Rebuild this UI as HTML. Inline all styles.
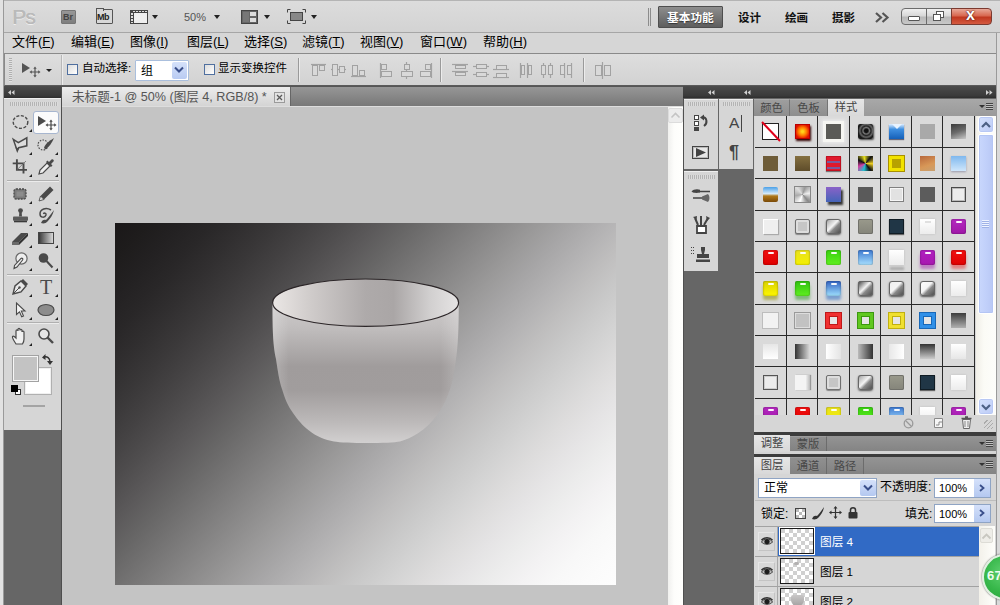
<!DOCTYPE html>
<html lang="zh-CN">
<head>
<meta charset="utf-8">
<title>Photoshop</title>
<style>
*{box-sizing:border-box;margin:0;padding:0}
html,body{width:1000px;height:605px;overflow:hidden;background:#666}
body{font-family:"Liberation Sans","Noto Sans CJK SC",sans-serif;font-size:12px;color:#000;position:relative}
.abs,.a{position:absolute}
#app{position:absolute;left:0;top:0;width:1000px;height:605px;overflow:hidden;background:#666666}
#appbar{left:0;top:0;width:1000px;height:33px;background:linear-gradient(#dcdcdc,#d3d3d3);border-bottom:1px solid #a6a6a6;border-top:1px solid #b4b4b4}
#menubar{left:0;top:33px;width:1000px;height:21px;background:#d6d6d6}
#optbar{left:4px;top:53px;width:993px;height:33px;background:linear-gradient(#dedede,#d2d2d2);border:1px solid #8a8a8a;border-bottom:1px solid #5a5a5a}
#leftedge{left:0;top:0;width:4px;height:605px;background:#e2e2e2;border-right:1px solid #9a9a9a}
#rightedge{left:996px;top:33px;width:4px;height:572px;background:#dadada;border-left:1px solid #9a9a9a}
.menu{position:absolute;top:32px;height:21px;line-height:20px;font-size:13px;white-space:nowrap;color:#000}
.menu u{text-decoration:underline;text-underline-offset:1px}
.lbl{position:absolute;white-space:nowrap}
.hdr{position:absolute;background:linear-gradient(#4b4b4b,#3a3a3a 80%,#2e2e2e);height:12px}
.panel{position:absolute;background:#d6d6d6}
.grip{position:absolute;height:4px;background:repeating-linear-gradient(90deg,#b4b4b4 0 1px,#dcdcdc 1px 2px)}
.tab{position:absolute;font-size:11.3px;line-height:17px;text-align:center;color:#3a3a3a;white-space:nowrap}
.tabon{background:linear-gradient(#e6e6e6,#d8d8d8);color:#444}
.taboff{background:linear-gradient(#9e9e9e,#8e8e8e);border-right:1px solid #747474;border-top:1px solid #aaa;color:#484848}
.tabbar{position:absolute;background:linear-gradient(#a8a8a8,#9a9a9a);height:17px}
.tabbar.dk{background:linear-gradient(#949494,#848484)}
.taboff.dk2{background:linear-gradient(#909090,#828282);border-top-color:#9c9c9c;border-right-color:#6c6c6c}
.cell{position:absolute;width:31px;height:31px;background:#dadada}
.sw{position:absolute;left:8px;top:8px;width:15px;height:15px}
.sep{position:absolute;left:7px;width:52px;height:1px;background:#b0b0b0;border-bottom:1px solid #ececec;height:2px}
svg{position:absolute;overflow:visible}
.tri{position:absolute;width:0;height:0;border-left:3px solid transparent;border-bottom:3px solid #222}
.inp{position:absolute;background:#fff;border:1px solid #8fa4c4}
</style>
</head>
<body>
<div id="app">
<div class="abs" id="appbar"></div>
<div class="abs" id="menubar"></div>
<div class="abs" id="optbar"></div>
<div class="menu" style="left:12px">文件(<u>F</u>)</div>
<div class="menu" style="left:71px">编辑(<u>E</u>)</div>
<div class="menu" style="left:130px">图像(<u>I</u>)</div>
<div class="menu" style="left:187px">图层(<u>L</u>)</div>
<div class="menu" style="left:244px">选择(<u>S</u>)</div>
<div class="menu" style="left:302px">滤镜(<u>T</u>)</div>
<div class="menu" style="left:360px">视图(<u>V</u>)</div>
<div class="menu" style="left:420px">窗口(<u>W</u>)</div>
<div class="menu" style="left:483px">帮助(<u>H</u>)</div>
<div class="lbl" style="left:12px;top:4px;font-size:21px;line-height:26px;color:#bababa;letter-spacing:-0.8px;text-shadow:0.4px 0 0 #bababa,0 1px 0 #efefef">Ps</div>
<div class="a" style="left:61px;top:10px;width:15px;height:14px;background:linear-gradient(#979797,#7e7e7e);border:1px solid #767676;border-radius:1px"></div><div class="lbl" style="left:63px;top:11px;font-size:9px;line-height:12px;color:#444;font-weight:bold">Br</div>
<div class="a" style="left:96px;top:9px;width:17px;height:15px;background:#d8d8d8;border:1px solid #555;border-radius:1px"></div><div class="a" style="left:96px;top:8px;width:8px;height:3px;background:#d8d8d8;border:1px solid #555;border-bottom:none"></div><div class="lbl" style="left:97px;top:11px;font-size:9px;line-height:12px;color:#222;font-weight:bold;letter-spacing:-0.5px">Mb</div>
<div class="a" style="left:130px;top:10px;width:18px;height:14px;background:#eee;border:1px solid #444;border-top:3px solid #444;border-left:4px solid #444"></div><div class="a" style="left:133px;top:11px;width:14px;height:1px;background:repeating-linear-gradient(90deg,#ddd 0 2px,#444 2px 3px)"></div>
<div class="a" style="left:131px;top:13px;width:2px;height:10px;background:repeating-linear-gradient(#ddd 0 2px,#444 2px 3px)"></div>
<div class="a" style="left:152px;top:15px;width:0;height:0;border-left:3.5px solid transparent;border-right:3.5px solid transparent;border-top:4.0px solid #222"></div>
<div class="lbl" style="left:184px;top:10px;font-size:11px;line-height:14px;color:#555">50%</div>
<div class="a" style="left:214px;top:15px;width:0;height:0;border-left:3.5px solid transparent;border-right:3.5px solid transparent;border-top:4.0px solid #222"></div>
<div class="a" style="left:241px;top:10px;width:17px;height:14px;background:#666;border:1px solid #444"></div><div class="a" style="left:250px;top:12px;width:6px;height:4px;background:#ddd"></div><div class="a" style="left:250px;top:18px;width:6px;height:4px;background:#ddd"></div><div class="a" style="left:243px;top:12px;width:6px;height:10px;background:#777"></div>
<div class="a" style="left:264px;top:15px;width:0;height:0;border-left:3.5px solid transparent;border-right:3.5px solid transparent;border-top:4.0px solid #222"></div>
<div class="a" style="left:290px;top:12px;width:13px;height:9px;background:#888;border:1px solid #444"></div>
<svg style="left:287px;top:9px" width="19" height="15"><path d="M0.5 3.5V0.5H3.5M15.5 0.5H18.5V3.5M18.5 11.5V14.5H15.5M3.5 14.5H0.5V11.5" fill="none" stroke="#444" stroke-width="1"/></svg>
<div class="a" style="left:311px;top:15px;width:0;height:0;border-left:3.5px solid transparent;border-right:3.5px solid transparent;border-top:4.0px solid #222"></div>
<div class="a" style="left:648px;top:8px;width:1px;height:18px;background:#8c8c8c"></div><div class="a" style="left:650px;top:8px;width:1px;height:18px;background:#8c8c8c"></div>
<div class="a" style="left:658px;top:6px;width:65px;height:22px;background:linear-gradient(#8e8e8e,#5e5e5e);border:1px solid #4e4e4e;border-radius:1px"></div>
<div class="lbl" style="left:667px;top:9px;font-size:11.7px;line-height:18px;color:#fff;font-weight:bold;text-shadow:0 1px 1px #333">基本功能</div>
<div class="lbl" style="left:738px;top:9px;font-size:11.5px;line-height:18px;color:#111;font-weight:bold">设计</div>
<div class="lbl" style="left:785px;top:9px;font-size:11.5px;line-height:18px;color:#111;font-weight:bold">绘画</div>
<div class="lbl" style="left:832px;top:9px;font-size:11.5px;line-height:18px;color:#111;font-weight:bold">摄影</div>
<svg style="left:875px;top:12px" width="14" height="11"><path d="M1 1L6 5.5L1 10M7.5 1L12.5 5.5L7.5 10" fill="none" stroke="#555" stroke-width="2.2"/></svg>
<div class="a" style="left:901px;top:8px;width:26px;height:17px;background:linear-gradient(#f0f0f0,#d8d8d8 45%,#b8b8b8 55%,#c8c8c8);border:1px solid #6c6c6c;border-radius:4px 0 0 4px"></div>
<div class="a" style="left:926px;top:8px;width:26px;height:17px;background:linear-gradient(#f0f0f0,#d8d8d8 45%,#b8b8b8 55%,#c8c8c8);border:1px solid #6c6c6c"></div>
<div class="a" style="left:951px;top:8px;width:41px;height:17px;background:linear-gradient(#e8a898,#d86850 45%,#c03820 55%,#d45a40);border:1px solid #7b3a30;border-radius:0 4px 4px 0"></div>
<div class="a" style="left:908px;top:16px;width:12px;height:5px;background:#fff;border:1px solid #555;border-radius:1px"></div>
<div class="a" style="left:936px;top:11px;width:8px;height:7px;background:#fff;border:1px solid #555"></div><div class="a" style="left:933px;top:14px;width:8px;height:7px;background:#fff;border:1px solid #555"></div>
<div class="lbl" style="left:966px;top:6px;font-size:16px;line-height:17px;color:#fff;font-weight:bold;text-shadow:0 0 2px #5b1a10,0 0 1px #5b1a10">x</div>
<div class="a" style="left:9px;top:58px;width:3px;height:24px;background:repeating-linear-gradient(#b0b0b0 0 1px,#e2e2e2 1px 2px)"></div>
<svg style="left:21px;top:62px" width="22" height="16"><path d="M1 1L1 11L9 6Z" fill="#555"/><path d="M14 6V14M10 10H18" stroke="#555" stroke-width="1.2" fill="none"/><path d="M14 4.5L12.3 6.8H15.7ZM14 15.5L12.3 13.2H15.7ZM8.5 10L10.8 8.3V11.7ZM19.5 10L17.2 8.3V11.7Z" fill="#555"/></svg>
<div class="a" style="left:46px;top:69px;width:0;height:0;border-left:3px solid transparent;border-right:3px solid transparent;border-top:3.5px solid #222"></div>
<div class="a" style="left:61px;top:55px;width:1px;height:30px;background:#b8b8b8"></div><div class="a" style="left:62px;top:55px;width:1px;height:30px;background:#ececec"></div>
<div class="a" style="left:67px;top:64px;width:11px;height:11px;background:linear-gradient(135deg,#dcdcdc,#fff);border:1px solid #4f6f9f"></div>
<div class="lbl" style="left:82px;top:60px;font-size:11.5px;line-height:17px;color:#000">自动选择:</div>
<div class="a" style="left:135px;top:60px;width:54px;height:21px;background:#fff;border:1px solid #aabfdd;border-radius:1px"></div>
<div class="lbl" style="left:141px;top:63px;font-size:12px;line-height:17px">组</div>
<div class="a" style="left:172px;top:62px;width:15px;height:17px;background:linear-gradient(#d5e1fa,#b9cbf2);border-radius:2px"></div>
<svg style="left:174px;top:66px" width="10" height="8"><path d="M1 1.5L5 5.5L9 1.5" fill="none" stroke="#3a4f8a" stroke-width="2"/></svg>
<div class="a" style="left:204px;top:64px;width:11px;height:11px;background:linear-gradient(135deg,#dcdcdc,#fff);border:1px solid #4f6f9f"></div>
<div class="lbl" style="left:218px;top:60px;font-size:11.5px;line-height:17px;color:#000">显示变换控件</div>
<div class="a" style="left:298px;top:58px;width:1px;height:24px;background:#9a9a9a"></div><div class="a" style="left:299px;top:58px;width:1px;height:24px;background:#ececec"></div>
<div class="a" style="left:440px;top:58px;width:1px;height:24px;background:#9a9a9a"></div><div class="a" style="left:441px;top:58px;width:1px;height:24px;background:#ececec"></div>
<div class="a" style="left:583px;top:58px;width:1px;height:24px;background:#9a9a9a"></div><div class="a" style="left:584px;top:58px;width:1px;height:24px;background:#ececec"></div>
<svg style="left:0;top:0" width="1000" height="100"><path d="M311 64.5L326 64.5" stroke="#a2a2a2" stroke-width="1.2"/><rect x="312.5" y="65.5" width="5" height="10" fill="#d9d9d9" stroke="#a2a2a2"/><rect x="319.5" y="65.5" width="5" height="5" fill="#d9d9d9" stroke="#a2a2a2"/><path d="M331 69.5L346 69.5" stroke="#a2a2a2" stroke-width="1.2"/><rect x="332.5" y="64.5" width="5" height="11" fill="#d9d9d9" stroke="#a2a2a2"/><rect x="339.5" y="66.5" width="5" height="6" fill="#d9d9d9" stroke="#a2a2a2"/><path d="M351 76.5L366 76.5" stroke="#a2a2a2" stroke-width="1.2"/><rect x="352.5" y="65.5" width="5" height="10" fill="#d9d9d9" stroke="#a2a2a2"/><rect x="359.5" y="70.5" width="5" height="5" fill="#d9d9d9" stroke="#a2a2a2"/><path d="M380.5 63L380.5 78" stroke="#a2a2a2" stroke-width="1.2"/><rect x="381.5" y="64.5" width="5" height="5" fill="#d9d9d9" stroke="#a2a2a2"/><rect x="381.5" y="71.5" width="10" height="5" fill="#d9d9d9" stroke="#a2a2a2"/><path d="M406.5 62L406.5 79" stroke="#a2a2a2" stroke-width="1.2"/><rect x="404.5" y="64.5" width="5" height="5" fill="#d9d9d9" stroke="#a2a2a2"/><rect x="401.5" y="71.5" width="11" height="5" fill="#d9d9d9" stroke="#a2a2a2"/><path d="M431.5 63L431.5 78" stroke="#a2a2a2" stroke-width="1.2"/><rect x="425.5" y="64.5" width="5" height="5" fill="#d9d9d9" stroke="#a2a2a2"/><rect x="420.5" y="71.5" width="10" height="5" fill="#d9d9d9" stroke="#a2a2a2"/><path d="M452 64.5L468 64.5" stroke="#a2a2a2" stroke-width="1.2"/><rect x="455.5" y="65.5" width="10" height="3" fill="#d9d9d9" stroke="#a2a2a2"/><path d="M452 71.5L468 71.5" stroke="#a2a2a2" stroke-width="1.2"/><rect x="455.5" y="72.5" width="10" height="3" fill="#d9d9d9" stroke="#a2a2a2"/><path d="M473 66.5L489 66.5" stroke="#a2a2a2" stroke-width="1.2"/><rect x="476.5" y="64.5" width="10" height="4" fill="#d9d9d9" stroke="#a2a2a2"/><path d="M473 74.5L489 74.5" stroke="#a2a2a2" stroke-width="1.2"/><rect x="476.5" y="72.5" width="10" height="4" fill="#d9d9d9" stroke="#a2a2a2"/><path d="M493 69.5L509 69.5" stroke="#a2a2a2" stroke-width="1.2"/><rect x="496.5" y="65.5" width="10" height="4" fill="#d9d9d9" stroke="#a2a2a2"/><path d="M493 77.5L509 77.5" stroke="#a2a2a2" stroke-width="1.2"/><rect x="496.5" y="73.5" width="10" height="4" fill="#d9d9d9" stroke="#a2a2a2"/><path d="M520.5 63L520.5 78" stroke="#a2a2a2" stroke-width="1.2"/><rect x="521.5" y="65.5" width="3" height="9" fill="#d9d9d9" stroke="#a2a2a2"/><path d="M527.5 63L527.5 78" stroke="#a2a2a2" stroke-width="1.2"/><rect x="528.5" y="65.5" width="3" height="9" fill="#d9d9d9" stroke="#a2a2a2"/><path d="M543.5 63L543.5 78" stroke="#a2a2a2" stroke-width="1.2"/><rect x="541.5" y="65.5" width="4" height="9" fill="#d9d9d9" stroke="#a2a2a2"/><path d="M550.5 63L550.5 78" stroke="#a2a2a2" stroke-width="1.2"/><rect x="548.5" y="65.5" width="4" height="9" fill="#d9d9d9" stroke="#a2a2a2"/><path d="M564.5 63L564.5 78" stroke="#a2a2a2" stroke-width="1.2"/><rect x="560.5" y="65.5" width="4" height="9" fill="#d9d9d9" stroke="#a2a2a2"/><path d="M571.5 63L571.5 78" stroke="#a2a2a2" stroke-width="1.2"/><rect x="567.5" y="65.5" width="4" height="9" fill="#d9d9d9" stroke="#a2a2a2"/><rect x="595.5" y="65.5" width="6" height="10" fill="#d9d9d9" stroke="#a2a2a2"/><rect x="604.5" y="65.5" width="6" height="10" fill="#d9d9d9" stroke="#a2a2a2"/><path d="M602.5 62L602.5 79" stroke="#a2a2a2" stroke-width="1.2"/></svg>
<div class="hdr" style="left:4px;top:86px;width:57px;height:12px"></div>
<svg style="left:8px;top:90px" width="7" height="5"><path d="M3 0L0 2.5L3 5ZM6.5 0L3.5 2.5L6.5 5Z" fill="#d0d0d0"/></svg>
<div class="panel" style="left:4px;top:98px;width:57px;height:332px;border-top:1px solid #efefef"></div>
<div class="grip" style="left:10px;top:102px;width:48px"></div>
<div class="a" style="left:61px;top:86px;width:1px;height:519px;background:#4e4e4e"></div>
<div class="a" style="left:33px;top:111px;width:26px;height:23px;background:#fbfbfb;border:1px solid #a7b6cf;border-radius:3px"></div>
<div class="sep" style="top:180px"></div>
<div class="sep" style="top:274px"></div>
<div class="sep" style="top:322px"></div>
<svg style="left:10px;top:112px" width="20" height="20" viewBox="0 0 20 20"><ellipse cx="10.5" cy="10" rx="7.3" ry="6.4" fill="none" stroke="#4a4a4a" stroke-width="1.4" stroke-dasharray="3 1.6"/></svg>
<div class="tri" style="left:29px;top:129px"></div>
<svg style="left:37px;top:115px" width="22" height="16"><path d="M1 1L1 11L9 6Z" fill="#4a4a4a"/><path d="M14 6V14M10 10H18" stroke="#4a4a4a" stroke-width="1.2" fill="none"/><path d="M14 4.5L12.3 6.8H15.7ZM14 15.5L12.3 13.2H15.7ZM8.5 10L10.8 8.3V11.7ZM19.5 10L17.2 8.3V11.7Z" fill="#4a4a4a"/></svg>
<svg style="left:10px;top:135px" width="20" height="20" viewBox="0 0 20 20"><path d="M3.3 4.4L8.3 7.7L16.8 2.8L16.8 10.8L8.7 12.7L7.3 16Z" fill="#dcdcdc" stroke="#4a4a4a" stroke-width="1.5" stroke-linejoin="miter"/><path d="M7.3 16.5L5.2 12.2L9 13.2Z" fill="#4a4a4a"/></svg>
<div class="tri" style="left:29px;top:152px"></div>
<svg style="left:36px;top:135px" width="20" height="20" viewBox="0 0 20 20"><circle cx="7" cy="10" r="5" fill="none" stroke="#4a4a4a" stroke-width="1.2" stroke-dasharray="1.5 1.3"/><path d="M8 13C9 9 13 6 18 3C16 8 13 12 9.5 14.5Z" fill="#4a4a4a"/></svg>
<div class="tri" style="left:55px;top:152px"></div>
<svg style="left:10px;top:157px" width="20" height="20" viewBox="0 0 20 20"><path d="M6.9 2.2V12.9H17M2.7 6.4H13.5V16.5" fill="none" stroke="#4a4a4a" stroke-width="1.9"/><path d="M7.5 12.3L16 4" stroke="#777" stroke-width="0.9"/></svg>
<div class="tri" style="left:29px;top:174px"></div>
<svg style="left:36px;top:157px" width="20" height="20" viewBox="0 0 20 20"><path d="M3 17L4 13L11 6L14 9L7 16Z" fill="#eee" stroke="#4a4a4a" stroke-width="1.2"/><path d="M10 5L15 10L16.5 8.5L15 7L17.5 4.5C18.5 3.2 16.8 1.5 15.5 2.5L13 5L11.5 3.5Z" fill="#4a4a4a"/></svg>
<div class="tri" style="left:55px;top:174px"></div>
<svg style="left:10px;top:184px" width="20" height="20" viewBox="0 0 20 20"><rect x="4" y="5" width="12" height="10" rx="2" fill="#7a7a7a" stroke="#4a4a4a" stroke-width="1.3" stroke-dasharray="2 1"/><rect x="6.5" y="7.5" width="7" height="5" fill="#8c8c8c"/></svg>
<div class="tri" style="left:29px;top:201px"></div>
<svg style="left:36px;top:184px" width="20" height="20" viewBox="0 0 20 20"><path d="M3 17L4.5 12L14 2.5L17.5 6L8 15.5Z" fill="#4a4a4a"/><path d="M3 17L4.5 12L8 15.5Z" fill="#ddd" stroke="#4a4a4a" stroke-width="0.8"/></svg>
<div class="tri" style="left:55px;top:201px"></div>
<svg style="left:10px;top:206px" width="20" height="20" viewBox="0 0 20 20"><circle cx="10.5" cy="4.6" r="2.4" fill="#4a4a4a"/><path d="M9.3 6H11.7L12 10.5H9Z" fill="#4a4a4a"/><rect x="3" y="10.5" width="15" height="4.2" rx="0.8" fill="#5a5a5a"/><rect x="4" y="14.7" width="13" height="1.6" fill="#3a3a3a"/></svg>
<div class="tri" style="left:29px;top:223px"></div>
<svg style="left:36px;top:206px" width="20" height="20" viewBox="0 0 20 20"><path d="M15 4C10 1 4 3 4 8C4 12 9 12 10 9C10.5 7 8 6.5 7.5 8" fill="none" stroke="#4a4a4a" stroke-width="1.5"/><path d="M5 17C6 14 8 13 10 14C12 12 15 8 18 4C17 9 14 13 11.5 15.5C10 17.5 7 18 5 17Z" fill="#4a4a4a"/></svg>
<div class="tri" style="left:55px;top:223px"></div>
<svg style="left:10px;top:228px" width="20" height="20" viewBox="0 0 20 20"><path d="M2 14L11 5H18L9 14Z" fill="#4a4a4a"/><path d="M2 14H9V17H2Z" fill="#6a6a6a"/><path d="M9 14L18 5V8L9 17Z" fill="#333"/></svg>
<div class="tri" style="left:29px;top:245px"></div>
<div class="a" style="left:38px;top:232px;width:16px;height:12px;border:1px solid #444;background:linear-gradient(90deg,#3a3a3a,#d8d8d8)"></div>
<div class="tri" style="left:55px;top:245px"></div>
<svg style="left:10px;top:251px" width="20" height="20" viewBox="0 0 20 20"><circle cx="11.5" cy="7.5" r="5.6" fill="#eee" stroke="#666" stroke-width="1.2"/><path d="M4 17.5L4.5 14.5L11 7.5C12 6.5 13.5 8 12.6 9L7 16Z" fill="#e8e8e8" stroke="#4a4a4a" stroke-width="1.1"/></svg>
<div class="tri" style="left:29px;top:268px"></div>
<svg style="left:36px;top:251px" width="20" height="20" viewBox="0 0 20 20"><circle cx="7.5" cy="7" r="4.8" fill="#4a4a4a"/><path d="M10.5 10L16.5 16.5" stroke="#4a4a4a" stroke-width="2"/></svg>
<div class="tri" style="left:55px;top:268px"></div>
<svg style="left:10px;top:277px" width="20" height="20" viewBox="0 0 20 20"><path d="M3 17L5 9L11 4L16 9L11 15Z" fill="#e8e8e8" stroke="#4a4a4a" stroke-width="1.4"/><path d="M11 4L13 2L18 7L16 9Z" fill="#4a4a4a"/><path d="M3 17L9 11" stroke="#4a4a4a"/><circle cx="9.5" cy="10.5" r="1.2" fill="#4a4a4a"/></svg>
<div class="tri" style="left:29px;top:294px"></div>
<div class="lbl" style="left:40px;top:274px;font-family:'Liberation Serif',serif;font-size:20px;line-height:26px;color:#4a4a4a">T</div>
<div class="tri" style="left:55px;top:294px"></div>
<svg style="left:10px;top:300px" width="20" height="20" viewBox="0 0 20 20"><path d="M6.5 3V14.5L9.5 11.8L11.7 16.8L13.5 16L11.3 11H15Z" fill="#f4f4f4" stroke="#4a4a4a" stroke-width="1.1"/></svg>
<div class="tri" style="left:29px;top:317px"></div>
<svg style="left:36px;top:300px" width="20" height="20" viewBox="0 0 20 20"><ellipse cx="10" cy="10" rx="8" ry="5.5" fill="#8c8c8c" stroke="#4a4a4a" stroke-width="1.2"/></svg>
<div class="tri" style="left:55px;top:317px"></div>
<svg style="left:10px;top:326px" width="20" height="20" viewBox="0 0 20 20"><path d="M6 18C4 15 2 12 2.5 10.5C3.5 9.5 5 11 6 12V5C6 3.5 8 3.5 8 5V3.5C8 2 10 2 10 3.5V4.5C10 3 12 3 12 4.5V6C12 4.8 14 4.8 14 6V13C14 15 13.5 16.5 12.5 18Z" fill="#f0f0f0" stroke="#4a4a4a" stroke-width="1.2"/></svg>
<div class="tri" style="left:29px;top:343px"></div>
<svg style="left:36px;top:326px" width="20" height="20" viewBox="0 0 20 20"><circle cx="8" cy="8" r="5" fill="#e6e6e6" stroke="#4a4a4a" stroke-width="1.6"/><path d="M11.5 11.5L17 17" stroke="#4a4a4a" stroke-width="2.4"/></svg>
<div class="a" style="left:25px;top:368px;width:26px;height:26px;background:#fff;border:1px solid #f0f0f0;box-shadow:0 0 0 1px #b0b0b0"></div>
<div class="a" style="left:13px;top:356px;width:25px;height:25px;background:#c3c3c3;border:1px solid #f6f6f6;box-shadow:0 0 0 1px #a2a2a2"></div>
<svg style="left:42px;top:353px" width="11" height="12"><path d="M2 4C5 3 8 5 8 9" fill="none" stroke="#333" stroke-width="1.5"/><path d="M0 4.5L3.5 1V7Z M8 12L5 8H11Z" fill="#333"/></svg>
<div class="a" style="left:15px;top:389px;width:6px;height:6px;background:#fff;border:1px solid #333"></div><div class="a" style="left:11px;top:385px;width:7px;height:7px;background:#000;border:1px solid #000"></div>
<div class="a" style="left:23px;top:405px;width:22px;height:2px;background:#a4a4a4"></div>
<div class="a" style="left:62px;top:86px;width:621px;height:20px;background:linear-gradient(#969696,#787878);border-top:1px solid #555"></div>
<div class="a" style="left:62px;top:87px;width:229px;height:19px;background:linear-gradient(#ececec,#d4d4d4);border-right:1px solid #666"></div>
<div class="lbl" style="left:72px;top:88px;font-size:12.6px;line-height:19px;color:#555">未标题-1 @ 50% (图层 4, RGB/8) *</div>
<div class="a" style="left:274px;top:92px;width:11px;height:11px;border:1px solid #9a9a9a;background:#e2e2e2"></div><svg style="left:277px;top:95px" width="5" height="5"><path d="M0 0L5 5M5 0L0 5" stroke="#5a5a5a" stroke-width="1.3"/></svg>
<div class="a" style="left:62px;top:106px;width:621px;height:499px;background:#c4c4c4;border-top:1px solid #ddd"></div>
<div class="a" style="left:668px;top:107px;width:15px;height:498px;background:linear-gradient(90deg,#f0f0ee,#fdfdfb 40%,#fffffd)"></div>
<div class="a" style="left:668px;top:108px;width:15px;height:15px;background:#ececec;border:1px solid #dcdcdc;border-radius:2px"></div>
<svg style="left:671px;top:112px" width="9" height="6"><path d="M0.5 5.5L4.5 1.5L8.5 5.5" fill="none" stroke="#c4c4c4" stroke-width="1.6"/></svg>
<div class="a" style="left:115px;top:223px;width:501px;height:362px;background:linear-gradient(131.3deg,rgb(26,23,24) 0%,rgb(30,28,28) 4%,rgb(35,33,34) 8%,rgb(41,39,40) 12%,rgb(49,47,48) 16%,rgb(58,56,57) 20%,rgb(68,66,67) 24%,rgb(79,77,78) 28%,rgb(91,89,90) 32%,rgb(103,102,102) 36%,rgb(116,115,115) 40%,rgb(129,128,128) 44%,rgb(142,141,141) 48%,rgb(155,154,154) 52%,rgb(167,166,167) 56%,rgb(179,178,179) 60%,rgb(191,190,190) 64%,rgb(201,201,201) 68%,rgb(211,211,211) 72%,rgb(221,220,220) 76%,rgb(229,228,229) 80%,rgb(236,236,236) 84%,rgb(243,242,243) 88%,rgb(248,248,248) 92%,rgb(251,251,251) 96%,rgb(253,253,253) 100%)"></div>
<svg style="left:115px;top:223px" width="500" height="362" viewBox="115 223 500 362">
<defs>
<linearGradient id="cb" x1="0" y1="303" x2="0" y2="444" gradientUnits="userSpaceOnUse"><stop offset="0" stop-color="#cfcccc"/><stop offset="0.18" stop-color="#c0bdbd"/><stop offset="0.45" stop-color="#a09c9c"/><stop offset="0.62" stop-color="#a19d9d"/><stop offset="0.85" stop-color="#bdbaba"/><stop offset="1" stop-color="#d3d1d1"/></linearGradient>
<linearGradient id="ci" x1="0" y1="0" x2="1" y2="0"><stop offset="0" stop-color="#ebe7e5"/><stop offset="0.2" stop-color="#d0cccb"/><stop offset="0.5" stop-color="#aeaaaa"/><stop offset="0.65" stop-color="#aaa6a6"/><stop offset="0.85" stop-color="#d2d0d0"/><stop offset="1" stop-color="#e6e4e4"/></linearGradient>
<linearGradient id="ce" x1="272" y1="0" x2="459" y2="0" gradientUnits="userSpaceOnUse"><stop offset="0" stop-color="#fff" stop-opacity="0.22"/><stop offset="0.09" stop-color="#fff" stop-opacity="0"/><stop offset="0.9" stop-color="#fff" stop-opacity="0"/><stop offset="1" stop-color="#fff" stop-opacity="0.2"/></linearGradient>
<filter id="bl" x="-10%" y="-10%" width="120%" height="120%"><feGaussianBlur stdDeviation="0.5"/></filter>
</defs>
<g filter="url(#bl)">
<path id="cp" d="M272.5 303 C272.5 330 273 345 276 359 C278 372 279 380 282 389 C285 399 288 406 293 413 C298 420 302 425 309 430.6 C317 437 325 440 334 441.5 C345 443.5 390 443.5 400 441.5 C406 440 412 437 417.6 433.6 C426 428 433 421 438.5 413 C444 405 447 398 450 389 C453 380 454.5 370 456 359 C458 345 458.7 330 458.7 303 Z" fill="url(#cb)"/>
<path d="M272.5 303 C272.5 330 273 345 276 359 C278 372 279 380 282 389 C285 399 288 406 293 413 C298 420 302 425 309 430.6 C317 437 325 440 334 441.5 C345 443.5 390 443.5 400 441.5 C406 440 412 437 417.6 433.6 C426 428 433 421 438.5 413 C444 405 447 398 450 389 C453 380 454.5 370 456 359 C458 345 458.7 330 458.7 303 Z" fill="url(#ce)"/>
</g>
<ellipse cx="365.6" cy="302.7" rx="93" ry="23.7" fill="url(#ci)" stroke="#2c2628" stroke-width="1.2"/>
</svg>
<div class="hdr" style="left:683px;top:86px;width:313px;height:12px"></div>
<svg style="left:708px;top:90px" width="7" height="5"><path d="M3 0L0 2.5L3 5ZM6.5 0L3.5 2.5L6.5 5Z" fill="#d0d0d0"/></svg>
<svg style="left:744px;top:90px" width="7" height="5"><path d="M3 0L0 2.5L3 5ZM6.5 0L3.5 2.5L6.5 5Z" fill="#d0d0d0"/></svg>
<svg style="left:986px;top:90px" width="7" height="5"><path d="M0 0L3 2.5L0 5ZM3.5 0L6.5 2.5L3.5 5Z" fill="#d0d0d0"/></svg>
<div class="a" style="left:683px;top:98px;width:1px;height:507px;background:#505050"></div>
<div class="panel" style="left:684px;top:99px;width:34px;height:70px;border-top:1px solid #eee"></div>
<div class="grip" style="left:688px;top:102px;width:27px"></div>
<div class="panel" style="left:684px;top:171px;width:34px;height:100px;border-top:1px solid #eee"></div>
<div class="grip" style="left:688px;top:175px;width:27px"></div>
<div class="panel" style="left:719px;top:99px;width:34px;height:70px;border-top:1px solid #eee"></div>
<div class="grip" style="left:723px;top:102px;width:27px"></div>
<svg style="left:693px;top:114px" width="18" height="18"><rect x="1.5" y="1.5" width="4" height="4" fill="#fff" stroke="#444"/><rect x="1.5" y="7.5" width="4" height="4" fill="#fff" stroke="#444"/><rect x="1" y="13" width="5" height="4" fill="#444"/><path d="M9 3C14 3 15 9 11 12" fill="none" stroke="#444" stroke-width="2"/><path d="M7 3.5L11 0.5V6.5Z" fill="#444"/></svg>
<div class="a" style="left:692px;top:146px;width:17px;height:13px;background:#e8e8e8;border:1px solid #444;box-shadow:inset 0 0 0 1px #bbb"></div><svg style="left:696px;top:148px" width="10" height="9"><path d="M0 0L10 4.5L0 9Z" fill="#444"/></svg>
<div class="lbl" style="left:729px;top:112px;font-size:15.5px;line-height:22px;color:#444">A</div><div class="a" style="left:741px;top:115px;width:1px;height:17px;background:#444"></div>
<div class="lbl" style="left:729px;top:141px;font-size:18px;line-height:22px;color:#444;font-weight:bold">¶</div>
<svg style="left:691px;top:188px" width="20" height="16"><path d="M8 3.5H19M2 10H12" stroke="#444" stroke-width="1.6"/><path d="M9 1.8C6 0.5 2 1.5 0.5 3.5C3 5.5 6.5 5 9 4.5Z" fill="#444"/><path d="M11 8.5L17 6C19 8 19 12 17 14L11 11.5Z" fill="#666"/></svg>
<svg style="left:692px;top:215px" width="18" height="20"><path d="M5 11H14V18H5Z" fill="#fff" stroke="#444" stroke-width="1.8"/><path d="M6 10L3 3M9 10V1M12 10L16 3" stroke="#444" stroke-width="2"/><path d="M1 2L5 1L4.5 5ZM14 1L18 3L15 6Z" fill="#444"/></svg>
<svg style="left:690px;top:246px" width="21" height="18"><path d="M1 1.5H4M1 4.5H4M1 7.5H4" stroke="#444" stroke-width="1.2" stroke-dasharray="1 1"/><path d="M11 1H15V4L14 8H19V12H7V8H12L11 4Z" fill="#444"/><rect x="6" y="13.5" width="14" height="2.5" fill="#444"/></svg>
<div class="tabbar" style="left:754px;top:99px;width:242px;height:17px"></div>
<div class="tab taboff" style="left:754px;top:99px;width:36px;height:17px">颜色</div>
<div class="tab taboff" style="left:790px;top:99px;width:38px;height:17px">色板</div>
<div class="tab tabon" style="left:828px;top:99px;width:36px;height:18px">样式</div>
<div class="a" style="left:979px;top:105px;width:0;height:0;border-left:3px solid transparent;border-right:3px solid transparent;border-top:3.5px solid #333"></div><div class="a" style="left:986px;top:103px;width:7px;height:7px;background:repeating-linear-gradient(#444 0 1px,#c0c0c0 1px 2px)"></div>
<div class="a" style="left:754px;top:116px;width:242px;height:316px;background:#d6d6d6"></div>
<div class="a" style="left:755px;top:116px;width:220px;height:299px;background:#2a2a2a;overflow:hidden"><div class="cell" style="left:0px;top:0px;width:31px;height:31px"><div class="sw" style="background:#fff;border:1px solid #222;left:7px;top:7px;width:17px;height:17px"></div><svg style="left:6px;top:5px" width="20" height="21"><path d="M1 1L19 20" stroke="#e0001a" stroke-width="2"/></svg></div><div class="cell" style="left:32px;top:0px;width:30px;height:31px"><div class="sw" style="background:radial-gradient(circle,#ffd21a 10%,#ff7a00 45%,#e01000 80%);box-shadow:1px 2px 2px #300;border:1px solid #b00"></div></div><div class="cell" style="left:63px;top:0px;width:31px;height:31px"><div class="sw" style="background:#5b5b57;box-shadow:0 0 0 3px #f6f6f2,0 0 3px 4px #eee"></div></div><div class="cell" style="left:95px;top:0px;width:30px;height:31px"><div class="sw" style="background:radial-gradient(circle at 55% 45%,#111 15%,#777 28%,#222 40%,#666 55%,#1a1a1a 70%);border-radius:2px;box-shadow:1px 1px 2px #444"></div></div><div class="cell" style="left:126px;top:0px;width:30px;height:31px"><div class="sw" style="background:linear-gradient(#dfeeff 0%,#3f8fe0 35%,#1560b8 100%);box-shadow:0 1px 1px #667"></div><div class="a" style="left:11px;top:8px;width:0;height:0;border-left:5px solid transparent;border-right:5px solid transparent;border-top:5px solid #e8f3ff"></div></div><div class="cell" style="left:157px;top:0px;width:30px;height:31px"><div class="sw" style="background:#a9a9a9;"></div></div><div class="cell" style="left:188px;top:0px;width:31px;height:31px"><div class="sw" style="background:linear-gradient(160deg,#3a3a3a,#6a6a6a 50%,#c8c8c8)"></div></div><div class="cell" style="left:0px;top:32px;width:31px;height:30px"><div class="sw" style="background:#6e5c38;"></div></div><div class="cell" style="left:32px;top:32px;width:30px;height:30px"><div class="sw" style="background:linear-gradient(#857040,#5e4c2a)"></div></div><div class="cell" style="left:63px;top:32px;width:31px;height:30px"><div class="sw" style="background:repeating-linear-gradient(#e0182c 0 4px,#7a5a9a 4px 6px);border:1px solid #c01020;box-shadow:0 1px 1px #777"></div></div><div class="cell" style="left:95px;top:32px;width:30px;height:30px"><div class="sw" style="background:conic-gradient(from 40deg,#111,#f0d020,#111,#20c0d0,#d040a0,#111,#e8e020,#111)"></div></div><div class="cell" style="left:126px;top:32px;width:30px;height:30px"><div class="sw" style="background:#b8a200;border:3px solid #f2e200;box-shadow:0 0 0 1px #a89000"></div></div><div class="cell" style="left:157px;top:32px;width:30px;height:30px"><div class="sw" style="background:linear-gradient(160deg,#b8683c,#d89858 60%,#c8a070)"></div></div><div class="cell" style="left:188px;top:32px;width:31px;height:30px"><div class="sw" style="background:linear-gradient(#7fb8ee,#cfe6fb);box-shadow:0 1px 2px #99a"></div></div><div class="cell" style="left:0px;top:63px;width:31px;height:31px"><div class="sw" style="background:linear-gradient(#4aa0e8 0%,#d8ecfa 45%,#b07818 60%,#7a4a08 100%);border-radius:2px"></div></div><div class="cell" style="left:32px;top:63px;width:30px;height:31px"><div class="sw" style="background:conic-gradient(from 20deg,#999,#eee,#888,#fff,#aaa,#ddd,#999);box-shadow:0 0 0 1px #888"></div></div><div class="cell" style="left:63px;top:63px;width:31px;height:31px"><div class="sw" style="background:linear-gradient(#8a62c8,#4464b8);box-shadow:2px 3px 2px #333"></div></div><div class="cell" style="left:95px;top:63px;width:30px;height:31px"><div class="sw" style="background:#5a5a5a;"></div></div><div class="cell" style="left:126px;top:63px;width:30px;height:31px"><div class="sw" style="background:#e2e2e2;border:1px solid #808080;box-shadow:inset 0 0 0 1px #f6f6f6"></div></div><div class="cell" style="left:157px;top:63px;width:30px;height:31px"><div class="sw" style="background:#5c5c5c;"></div></div><div class="cell" style="left:188px;top:63px;width:31px;height:31px"><div class="sw" style="background:#ececec;border:1px solid #4a4a4a;box-shadow:inset 0 0 0 1px #bbb"></div></div><div class="cell" style="left:0px;top:95px;width:31px;height:30px"><div class="sw" style="background:#efefef;box-shadow:1px 1px 1px #aaa, inset 1px 1px 0 #fff"></div></div><div class="cell" style="left:32px;top:95px;width:30px;height:30px"><div class="sw" style="background:#c6c6c6;border:1px solid #707070;border-radius:2px;box-shadow:inset 0 0 0 2px #ddd,0 1px 1px #888"></div></div><div class="cell" style="left:63px;top:95px;width:31px;height:30px"><div class="sw" style="background:linear-gradient(135deg,#999,#f4f4f4 45%,#8a8a8a 60%,#444);border-radius:3px;box-shadow:0 1px 2px #555, inset 0 0 0 1px #666"></div></div><div class="cell" style="left:95px;top:95px;width:30px;height:30px"><div class="sw" style="background:linear-gradient(#9a9a8c,#84847a);border-radius:2px;box-shadow:inset 0 0 0 1px #70706a"></div></div><div class="cell" style="left:126px;top:95px;width:30px;height:30px"><div class="sw" style="background:#203646;box-shadow:inset 0 0 0 1px #101c24,0 1px 1px #666"></div></div><div class="cell" style="left:157px;top:95px;width:30px;height:30px"><div class="sw" style="background:linear-gradient(#fff,#ececec);box-shadow:0 0 2px #bbb"></div><div class="a" style="left:13px;top:10px;width:6px;height:2px;background:#e0e0e0"></div></div><div class="cell" style="left:188px;top:95px;width:31px;height:30px"><div class="sw" style="background:linear-gradient(#b428c0,#a018a8);border-radius:2px;box-shadow:inset 0 0 2px rgba(0,0,0,.45)"></div><div class="a" style="left:13px;top:10px;width:6px;height:2px;background:#fff;border-radius:1px;opacity:.95"></div></div><div class="cell" style="left:0px;top:126px;width:31px;height:30px"><div class="sw" style="background:linear-gradient(#f01010,#e00000);border-radius:2px;box-shadow:inset 0 0 2px rgba(0,0,0,.45)"></div><div class="a" style="left:13px;top:10px;width:6px;height:2px;background:#fff;border-radius:1px;opacity:.95"></div></div><div class="cell" style="left:32px;top:126px;width:30px;height:30px"><div class="sw" style="background:linear-gradient(#e8e020,#f4f000);border-radius:2px;box-shadow:inset 0 0 2px rgba(0,0,0,.45)"></div><div class="a" style="left:13px;top:10px;width:6px;height:2px;background:#fff;border-radius:1px;opacity:.95"></div></div><div class="cell" style="left:63px;top:126px;width:31px;height:30px"><div class="sw" style="background:linear-gradient(#38d010,#60f020);border-radius:2px;box-shadow:inset 0 0 2px rgba(0,0,0,.45)"></div><div class="a" style="left:13px;top:10px;width:6px;height:2px;background:#fff;border-radius:1px;opacity:.95"></div></div><div class="cell" style="left:95px;top:126px;width:30px;height:30px"><div class="sw" style="background:linear-gradient(#3c78d0,#a8e0ff);border-radius:2px;box-shadow:inset 0 0 2px rgba(0,0,0,.45)"></div><div class="a" style="left:13px;top:10px;width:6px;height:2px;background:#fff;border-radius:1px;opacity:.95"></div></div><div class="cell" style="left:126px;top:126px;width:30px;height:30px"><div class="sw" style="background:linear-gradient(#fff,#ececec);box-shadow:0 0 2px #bbb"></div><div class="a" style="left:9px;top:25px;width:14px;height:3px;background:#aaa;filter:blur(1px)"></div></div><div class="cell" style="left:157px;top:126px;width:30px;height:30px"><div class="sw" style="background:linear-gradient(#b020c0,#a818b0);border-radius:2px;box-shadow:inset 0 0 2px rgba(0,0,0,.45),0 4px 3px rgba(160,40,170,.5)"></div><div class="a" style="left:13px;top:10px;width:6px;height:2px;background:#fff;border-radius:1px;opacity:.95"></div></div><div class="cell" style="left:188px;top:126px;width:31px;height:30px"><div class="sw" style="background:linear-gradient(#f01010,#e00000);border-radius:2px;box-shadow:inset 0 0 2px rgba(0,0,0,.45),0 4px 3px rgba(230,40,40,.5)"></div><div class="a" style="left:13px;top:10px;width:6px;height:2px;background:#fff;border-radius:1px;opacity:.95"></div></div><div class="cell" style="left:0px;top:157px;width:31px;height:31px"><div class="sw" style="background:linear-gradient(#d8d000,#fff800);border-radius:2px;box-shadow:inset 0 0 2px rgba(0,0,0,.45),0 4px 3px rgba(150,150,20,.6)"></div><div class="a" style="left:13px;top:10px;width:6px;height:2px;background:#fff;border-radius:1px;opacity:.95"></div></div><div class="cell" style="left:32px;top:157px;width:30px;height:31px"><div class="sw" style="background:linear-gradient(#30c010,#60f020);border-radius:2px;box-shadow:inset 0 0 2px rgba(0,0,0,.45),0 4px 3px rgba(40,150,30,.5)"></div><div class="a" style="left:13px;top:10px;width:6px;height:2px;background:#fff;border-radius:1px;opacity:.95"></div></div><div class="cell" style="left:63px;top:157px;width:31px;height:31px"><div class="sw" style="background:linear-gradient(#3060c0,#a0e0ff);border-radius:2px;box-shadow:inset 0 0 2px rgba(0,0,0,.45),0 4px 3px rgba(60,120,200,.6)"></div><div class="a" style="left:13px;top:10px;width:6px;height:2px;background:#fff;border-radius:1px;opacity:.95"></div></div><div class="cell" style="left:95px;top:157px;width:30px;height:31px"><div class="sw" style="background:linear-gradient(135deg,#333,#f4f4f4 45%,#8a8a8a 60%,#444);border-radius:3px;box-shadow:0 1px 2px #555, inset 0 0 0 1px #666"></div></div><div class="cell" style="left:126px;top:157px;width:30px;height:31px"><div class="sw" style="background:linear-gradient(135deg,#eee,#f4f4f4 45%,#8a8a8a 60%,#444);border-radius:3px;box-shadow:0 1px 2px #555, inset 0 0 0 1px #666"></div></div><div class="cell" style="left:157px;top:157px;width:30px;height:31px"><div class="sw" style="background:linear-gradient(135deg,#fff,#f4f4f4 45%,#8a8a8a 60%,#444);border-radius:3px;box-shadow:0 1px 2px #555, inset 0 0 0 1px #666"></div></div><div class="cell" style="left:188px;top:157px;width:31px;height:31px"><div class="sw" style="background:linear-gradient(#fff,#ececec);box-shadow:0 0 2px #bbb"></div></div><div class="cell" style="left:0px;top:189px;width:31px;height:30px"><div class="sw" style="background:#f2f2f2;box-shadow:0 0 0 1px #bdbdbd"></div></div><div class="cell" style="left:32px;top:189px;width:30px;height:30px"><div class="sw" style="background:#c2c2c2;box-shadow:0 0 0 1px #9a9a9a, inset 0 0 0 1px #ddd"></div></div><div class="cell" style="left:63px;top:189px;width:31px;height:30px"><div class="sw" style="background:#e6e6e6;border:3px solid #f03030;box-shadow:0 0 0 1px #c01818, inset 0 0 0 1px #c01818"></div></div><div class="cell" style="left:95px;top:189px;width:30px;height:30px"><div class="sw" style="background:#e6e6e6;border:3px solid #60c820;box-shadow:0 0 0 1px #3c9810, inset 0 0 0 1px #3c9810"></div></div><div class="cell" style="left:126px;top:189px;width:30px;height:30px"><div class="sw" style="background:#e6e6e6;border:3px solid #f0e030;box-shadow:0 0 0 1px #c0b010, inset 0 0 0 1px #c0b010"></div></div><div class="cell" style="left:157px;top:189px;width:30px;height:30px"><div class="sw" style="background:#e6e6e6;border:3px solid #3090e8;box-shadow:0 0 0 1px #1868b8, inset 0 0 0 1px #1868b8"></div></div><div class="cell" style="left:188px;top:189px;width:31px;height:30px"><div class="sw" style="background:linear-gradient(#3c3c3c,#b0b0b0)"></div></div><div class="cell" style="left:0px;top:220px;width:31px;height:30px"><div class="sw" style="background:linear-gradient(#e6e6e6,#fff)"></div></div><div class="cell" style="left:32px;top:220px;width:30px;height:30px"><div class="sw" style="background:linear-gradient(90deg,#333,#ddd)"></div></div><div class="cell" style="left:63px;top:220px;width:31px;height:30px"><div class="sw" style="background:linear-gradient(90deg,#fff,#e4e4e4)"></div></div><div class="cell" style="left:95px;top:220px;width:30px;height:30px"><div class="sw" style="background:linear-gradient(90deg,#bbb,#333)"></div></div><div class="cell" style="left:126px;top:220px;width:30px;height:30px"><div class="sw" style="background:linear-gradient(90deg,#e8e8e8,#fff)"></div></div><div class="cell" style="left:157px;top:220px;width:30px;height:30px"><div class="sw" style="background:linear-gradient(#333,#ccc)"></div></div><div class="cell" style="left:188px;top:220px;width:31px;height:30px"><div class="sw" style="background:linear-gradient(#fff,#e6e6e6)"></div></div><div class="cell" style="left:0px;top:251px;width:31px;height:31px"><div class="sw" style="background:#ececec;border:1px solid #555;box-shadow:inset 0 0 0 1px #ccc"></div></div><div class="cell" style="left:32px;top:251px;width:30px;height:31px"><div class="sw" style="background:linear-gradient(90deg,#f4f4f4 70%,#bbb);box-shadow:1px 0 1px #999"></div></div><div class="cell" style="left:63px;top:251px;width:31px;height:31px"><div class="sw" style="background:#c6c6c6;border:1px solid #707070;border-radius:2px;box-shadow:inset 0 0 0 2px #ddd,0 1px 1px #888"></div></div><div class="cell" style="left:95px;top:251px;width:30px;height:31px"><div class="sw" style="background:linear-gradient(135deg,#999,#f4f4f4 45%,#8a8a8a 60%,#444);border-radius:3px;box-shadow:0 1px 2px #555, inset 0 0 0 1px #666"></div></div><div class="cell" style="left:126px;top:251px;width:30px;height:31px"><div class="sw" style="background:linear-gradient(#9a9a8c,#84847a);border-radius:2px;box-shadow:inset 0 0 0 1px #70706a"></div></div><div class="cell" style="left:157px;top:251px;width:30px;height:31px"><div class="sw" style="background:#203646;box-shadow:inset 0 0 0 1px #101c24,0 1px 1px #666"></div></div><div class="cell" style="left:188px;top:251px;width:31px;height:31px"><div class="sw" style="background:linear-gradient(#fff,#ececec);box-shadow:0 0 2px #bbb"></div></div><div class="cell" style="left:0px;top:283px;width:31px;height:36px"><div class="sw" style="background:linear-gradient(#b428c0,#a018a8);border-radius:2px;box-shadow:inset 0 0 2px rgba(0,0,0,.45)"></div><div class="a" style="left:13px;top:10px;width:6px;height:2px;background:#fff;border-radius:1px;opacity:.95"></div></div><div class="cell" style="left:32px;top:283px;width:30px;height:36px"><div class="sw" style="background:linear-gradient(#f01010,#e00000);border-radius:2px;box-shadow:inset 0 0 2px rgba(0,0,0,.45)"></div><div class="a" style="left:13px;top:10px;width:6px;height:2px;background:#fff;border-radius:1px;opacity:.95"></div></div><div class="cell" style="left:63px;top:283px;width:31px;height:36px"><div class="sw" style="background:linear-gradient(#e8e020,#f4f000);border-radius:2px;box-shadow:inset 0 0 2px rgba(0,0,0,.45)"></div><div class="a" style="left:13px;top:10px;width:6px;height:2px;background:#fff;border-radius:1px;opacity:.95"></div></div><div class="cell" style="left:95px;top:283px;width:30px;height:36px"><div class="sw" style="background:linear-gradient(#38d010,#60f020);border-radius:2px;box-shadow:inset 0 0 2px rgba(0,0,0,.45)"></div><div class="a" style="left:13px;top:10px;width:6px;height:2px;background:#fff;border-radius:1px;opacity:.95"></div></div><div class="cell" style="left:126px;top:283px;width:30px;height:36px"><div class="sw" style="background:linear-gradient(#3c78d0,#a8e0ff);border-radius:2px;box-shadow:inset 0 0 2px rgba(0,0,0,.45)"></div><div class="a" style="left:13px;top:10px;width:6px;height:2px;background:#fff;border-radius:1px;opacity:.95"></div></div><div class="cell" style="left:157px;top:283px;width:30px;height:36px"><div class="sw" style="background:linear-gradient(#fff,#ececec);box-shadow:0 0 2px #bbb"></div></div><div class="cell" style="left:188px;top:283px;width:31px;height:36px"><div class="sw" style="background:linear-gradient(#b428c0,#a018a8);border-radius:2px;box-shadow:inset 0 0 2px rgba(0,0,0,.45)"></div><div class="a" style="left:13px;top:10px;width:6px;height:2px;background:#fff;border-radius:1px;opacity:.95"></div></div></div>
<div class="a" style="left:976px;top:116px;width:20px;height:299px;background:linear-gradient(90deg,#f1efe8,#fbfbf6 40%,#fdfdfa)"></div>
<div class="a" style="left:978px;top:116px;width:16px;height:17px;background:linear-gradient(135deg,#d6e2fd,#bccbf6);border:1px solid #fff;border-radius:3px;box-shadow:inset 0 0 0 1px #b8c8f4"></div><svg style="left:981px;top:120.5px" width="10" height="8"><path d="M1 6L5 2L9 6" fill="none" stroke="#4d6185" stroke-width="2.2"/></svg>
<div class="a" style="left:978px;top:134px;width:16px;height:180px;background:linear-gradient(90deg,#c9d7fc,#c1d0fa 50%,#b9c8f5);border:1px solid #fff;border-radius:2px;box-shadow:inset 0 0 0 1px #b4c5f4"></div>
<div class="a" style="left:982px;top:220px;width:7px;height:8px;background:repeating-linear-gradient(#eef3ff 0 1px,#9fb2e6 1px 2px)"></div>
<div class="a" style="left:978px;top:398px;width:16px;height:17px;background:linear-gradient(135deg,#d6e2fd,#bccbf6);border:1px solid #fff;border-radius:3px;box-shadow:inset 0 0 0 1px #b8c8f4"></div><svg style="left:981px;top:402.5px" width="10" height="8"><path d="M1 2L5 6L9 2" fill="none" stroke="#4d6185" stroke-width="2.2"/></svg>
<svg style="left:903px;top:418px" width="11" height="11"><circle cx="5.5" cy="5.5" r="4.3" fill="none" stroke="#9a9a9a" stroke-width="1.3"/><path d="M2.5 2.5L8.5 8.5" stroke="#9a9a9a" stroke-width="1.3"/></svg>
<svg style="left:933px;top:417px" width="11" height="12"><path d="M1.5 1.5H9.5V10.5H1.5Z" fill="#f6f6f6" stroke="#8a8a8a"/><path d="M3 8H6V5H9" fill="none" stroke="#8a8a8a"/></svg>
<svg style="left:961px;top:416px" width="11" height="13"><path d="M1.5 3.5H9.5L8.5 12.5H2.5Z" fill="#eee" stroke="#6a6a6a"/><path d="M0.5 2.5H10.5M4 1H7" stroke="#555" stroke-width="1.4"/><path d="M4 5V11M7 5V11" stroke="#888"/></svg>
<div class="a" style="left:984px;top:420px;width:9px;height:9px;background:repeating-linear-gradient(135deg,transparent 0 2px,#aaa 2px 3px)"></div>
<div class="a" style="left:754px;top:432px;width:242px;height:4px;background:#3c3c3c"></div>
<div class="a" style="left:754px;top:451px;width:242px;height:3px;background:#d4d4d4"></div>
<div class="a" style="left:754px;top:454px;width:242px;height:3px;background:#3c3c3c"></div>
<div class="tabbar dk" style="left:754px;top:436px;width:242px;height:15px"></div>
<div class="tab tabon" style="left:754px;top:435px;width:36px;height:17px;line-height:17px">调整</div>
<div class="tab taboff dk2" style="left:790px;top:436px;width:37px;height:15px;line-height:15px">蒙版</div>
<div class="a" style="left:979px;top:442px;width:0;height:0;border-left:3px solid transparent;border-right:3px solid transparent;border-top:3.5px solid #333"></div><div class="a" style="left:986px;top:440px;width:7px;height:7px;background:repeating-linear-gradient(#444 0 1px,#c0c0c0 1px 2px)"></div>
<div class="tabbar dk" style="left:754px;top:457px;width:242px;height:17px"></div>
<div class="tab tabon" style="left:754px;top:457px;width:36px;height:18px">图层</div>
<div class="tab taboff dk2" style="left:790px;top:457px;width:37px;height:17px">通道</div>
<div class="tab taboff dk2" style="left:827px;top:457px;width:37px;height:17px">路径</div>
<div class="a" style="left:979px;top:463px;width:0;height:0;border-left:3px solid transparent;border-right:3px solid transparent;border-top:3.5px solid #333"></div><div class="a" style="left:986px;top:461px;width:7px;height:7px;background:repeating-linear-gradient(#444 0 1px,#c0c0c0 1px 2px)"></div>
<div class="a" style="left:754px;top:474px;width:242px;height:131px;background:#d6d6d6"></div>
<div class="inp" style="left:758px;top:478px;width:119px;height:20px"></div>
<div class="lbl" style="left:764px;top:480px;font-size:12px;line-height:17px">正常</div>
<div class="a" style="left:860px;top:480px;width:16px;height:16px;background:linear-gradient(#d5e1fa,#b4c8f0);border-radius:2px"></div>
<svg style="left:863px;top:484px" width="10" height="8"><path d="M1 1.5L5 5.5L9 1.5" fill="none" stroke="#3a4f8a" stroke-width="2"/></svg>
<div class="lbl" style="left:880px;top:479px;font-size:12px;line-height:17px">不透明度:</div>
<div class="inp" style="left:934px;top:478px;width:57px;height:20px"></div>
<div class="lbl" style="left:939px;top:480px;font-size:11px;line-height:17px">100%</div>
<div class="a" style="left:974px;top:479px;width:16px;height:18px;background:linear-gradient(#d5e1fa,#b4c8f0)"></div><svg style="left:979px;top:484px" width="6" height="8"><path d="M1 1L4.5 4L1 7" fill="none" stroke="#3a4f8a" stroke-width="1.8"/></svg>
<div class="a" style="left:755px;top:500px;width:241px;height:1px;background:#bdbdbd"></div>
<div class="lbl" style="left:761px;top:506px;font-size:12px;line-height:17px">锁定:</div>
<div class="a" style="left:795px;top:508px;width:11px;height:11px;border:1px solid #444;background:conic-gradient(#fff 25%,#bbb 0 50%,#fff 0 75%,#bbb 0);background-size:6px 6px"></div>
<svg style="left:811px;top:506px" width="14" height="14"><path d="M1 13C2 10 4 9 6 10C8 8 11 4 13 1C12.5 5 10 9 7.5 11.5C6 13.5 3 14 1 13Z" fill="#333"/></svg>
<svg style="left:829px;top:506px" width="13" height="13"><path d="M6.5 1V12M1 6.5H12" stroke="#333" stroke-width="1.2"/><path d="M6.5 0L4.5 2.5H8.5ZM6.5 13L4.5 10.5H8.5ZM0 6.5L2.5 4.5V8.5ZM13 6.5L10.5 4.5V8.5Z" fill="#333"/></svg>
<svg style="left:848px;top:506px" width="10" height="13"><path d="M2.5 6V4C2.5 1 7.5 1 7.5 4V6" fill="none" stroke="#333" stroke-width="1.5"/><rect x="0.5" y="6" width="9" height="6.5" rx="1" fill="#333"/></svg>
<div class="lbl" style="left:905px;top:506px;font-size:12px;line-height:17px">填充:</div>
<div class="inp" style="left:934px;top:504px;width:57px;height:19px"></div>
<div class="lbl" style="left:939px;top:506px;font-size:11px;line-height:17px">100%</div>
<div class="a" style="left:974px;top:505px;width:16px;height:17px;background:linear-gradient(#d5e1fa,#b4c8f0)"></div><svg style="left:979px;top:509px" width="6" height="8"><path d="M1 1L4.5 4L1 7" fill="none" stroke="#3a4f8a" stroke-width="1.8"/></svg>
<div class="a" style="left:755px;top:526px;width:224px;height:30px;background:#d8d8d8;border-top:1px solid #a2a2a2"></div>
<div class="a" style="left:777px;top:527px;width:202px;height:29px;background:#316ac5;border-left:1px solid #a8a8a8"></div>
<div class="a" style="left:758px;top:532px;width:17px;height:19px;border:1px solid #e6e6e6;border-right-color:#c4c4c4;border-bottom-color:#c4c4c4"></div>
<svg style="left:761px;top:537px" width="12" height="9"><path d="M0.5 5C2.5 1 9.5 1 11.5 5C9.5 8 2.5 8 0.5 5Z" fill="#bbb" stroke="#444" stroke-width="1"/><circle cx="6" cy="4.6" r="2.6" fill="#1c1c1c"/><path d="M0.5 3.2C3 0 9 0 11.5 3.2" fill="none" stroke="#333" stroke-width="1.5"/></svg>
<div class="a" style="left:780px;top:528px;width:34px;height:26px;border:1px solid #1a1a1a;box-shadow:0 0 0 1px #fff;background:conic-gradient(#fff 25%,#d0d0d0 0 50%,#fff 0 75%,#d0d0d0 0);background-size:8px 8px"></div>
<div class="lbl" style="left:820px;top:533px;font-size:11.7px;line-height:17px;color:#fff">图层 4</div>
<div class="a" style="left:755px;top:556px;width:224px;height:30px;background:#d8d8d8;border-top:1px solid #a2a2a2"></div>
<div class="a" style="left:777px;top:557px;width:202px;height:29px;background:#d6d6d6;border-left:1px solid #a8a8a8"></div>
<div class="a" style="left:758px;top:562px;width:17px;height:19px;border:1px solid #e6e6e6;border-right-color:#c4c4c4;border-bottom-color:#c4c4c4"></div>
<svg style="left:761px;top:567px" width="12" height="9"><path d="M0.5 5C2.5 1 9.5 1 11.5 5C9.5 8 2.5 8 0.5 5Z" fill="#bbb" stroke="#444" stroke-width="1"/><circle cx="6" cy="4.6" r="2.6" fill="#1c1c1c"/><path d="M0.5 3.2C3 0 9 0 11.5 3.2" fill="none" stroke="#333" stroke-width="1.5"/></svg>
<div class="a" style="left:780px;top:558px;width:34px;height:26px;border:1px solid #1a1a1a;box-shadow:0 0 0 1px transparent;background:conic-gradient(#fff 25%,#d0d0d0 0 50%,#fff 0 75%,#d0d0d0 0);background-size:8px 8px"><div style="position:absolute;left:13px;top:3px;width:5px;height:3px;background:#b4b2b2;border-radius:2px"></div></div>
<div class="lbl" style="left:820px;top:563px;font-size:11.7px;line-height:17px;color:#000">图层 1</div>
<div class="a" style="left:755px;top:586px;width:224px;height:30px;background:#d8d8d8;border-top:1px solid #a2a2a2"></div>
<div class="a" style="left:777px;top:587px;width:202px;height:29px;background:#d6d6d6;border-left:1px solid #a8a8a8"></div>
<div class="a" style="left:758px;top:592px;width:17px;height:19px;border:1px solid #e6e6e6;border-right-color:#c4c4c4;border-bottom-color:#c4c4c4"></div>
<svg style="left:761px;top:597px" width="12" height="9"><path d="M0.5 5C2.5 1 9.5 1 11.5 5C9.5 8 2.5 8 0.5 5Z" fill="#bbb" stroke="#444" stroke-width="1"/><circle cx="6" cy="4.6" r="2.6" fill="#1c1c1c"/><path d="M0.5 3.2C3 0 9 0 11.5 3.2" fill="none" stroke="#333" stroke-width="1.5"/></svg>
<div class="a" style="left:780px;top:588px;width:34px;height:26px;border:1px solid #1a1a1a;box-shadow:0 0 0 1px transparent;background:conic-gradient(#fff 25%,#d0d0d0 0 50%,#fff 0 75%,#d0d0d0 0);background-size:8px 8px"><div style="position:absolute;left:10px;top:6px;width:13px;height:11px;background:linear-gradient(#c8c6c6,#a4a2a2);border-radius:2px 2px 6px 6px"></div></div>
<div class="lbl" style="left:820px;top:593px;font-size:11.7px;line-height:17px;color:#000">图层 2</div>
<div class="a" style="left:979px;top:526px;width:16px;height:79px;background:linear-gradient(90deg,#f3f1ea,#fefefb)"></div>
<div class="a" style="left:980px;top:528px;width:13px;height:15px;background:#eeede8;border:1px solid #dddcd6;border-radius:2px"></div><svg style="left:982px;top:533px" width="9" height="6"><path d="M0.5 5.5L4.5 1.5L8.5 5.5" fill="none" stroke="#c8c7c0" stroke-width="1.8"/></svg>
<div class="abs" id="leftedge"></div>
<div class="abs" id="rightedge"></div>
<div class="a" style="left:982px;top:554px;width:46px;height:46px;box-sizing:border-box;border-radius:50%;background:radial-gradient(circle at 45% 40%,#5fd070,#35b648 55%,#27a03a);border:2px solid #dff0e0;box-shadow:0 0 2px #444"></div><div class="lbl" style="left:987px;top:568px;font-size:13px;line-height:16px;color:#eefcee;font-weight:bold;letter-spacing:0.3px">67</div>
</div>
</body>
</html>
